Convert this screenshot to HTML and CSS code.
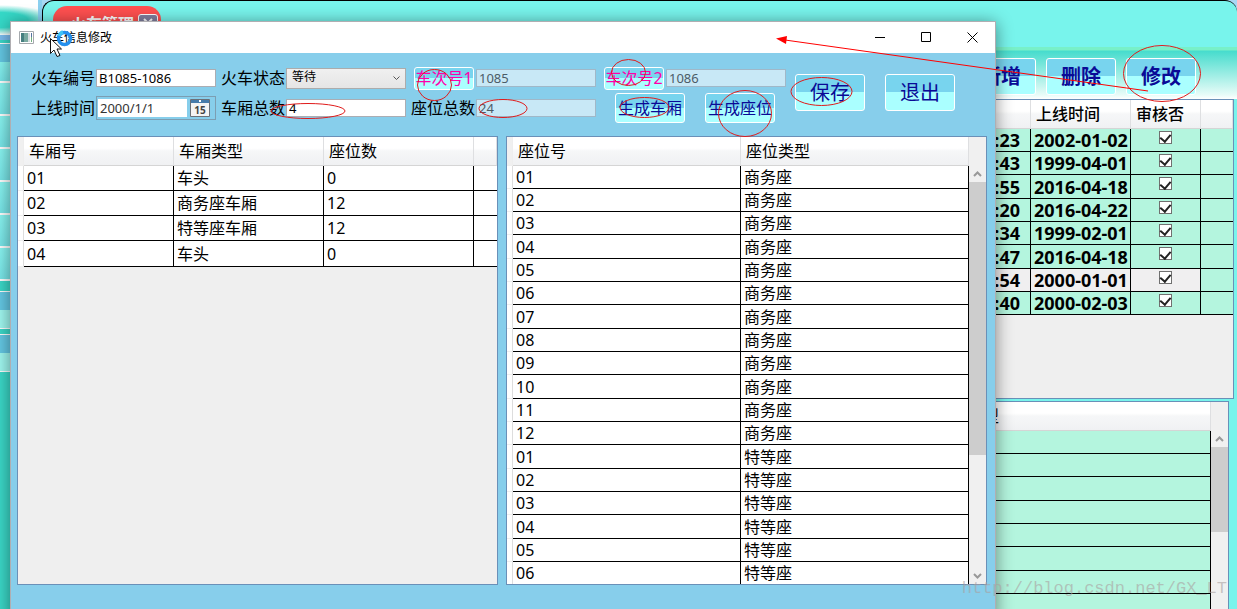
FILE: index.html
```html
<!DOCTYPE html>
<html lang="zh-CN">
<head>
<meta charset="utf-8">
<title>火车信息修改</title>
<link rel="stylesheet" href="styles.css">
</head>
<body>
<div class="app">
  <aside class="side">
    <div class="side-top"></div>
    <div class="side-head"></div>
    <div class="side-item side-first"></div>
    <div class="side-item"></div>
    <div class="side-item"></div>
    <div class="side-item"></div>
    <div class="side-item"></div>
    <div class="side-item"></div>
    <div class="side-item"></div>
    <div class="side-group"></div>
    <div class="side-group"></div>
  </aside>
  <main class="main">
    <div class="tabs"><div class="tab">火车管理<button class="tab-close" aria-label="关闭标签"><svg viewBox="0 0 10 10"><path d="M1 1l8 8M9 1L1 9"/></svg></button></div></div>
    <div class="toolbar">
      <button class="glass bold">新增</button>
      <button class="glass bold">删除</button>
      <button class="glass bold">修改</button>
    </div>
    <div class="panel trains">
      <table class="grid train-grid">
        <colgroup><col><col class="w-date"><col class="w-check"><col class="w-rest"></colgroup>
        <thead><tr><th></th><th>上线时间</th><th>审核否</th><th></th></tr></thead>
        <tbody>
          <tr><td class="r">:23</td><td>2002-01-02</td><td class="c"><input type="checkbox" checked aria-label="审核否"></td><td></td></tr>
          <tr><td class="r">:43</td><td>1999-04-01</td><td class="c"><input type="checkbox" checked aria-label="审核否"></td><td></td></tr>
          <tr><td class="r">:55</td><td>2016-04-18</td><td class="c"><input type="checkbox" checked aria-label="审核否"></td><td></td></tr>
          <tr><td class="r">:20</td><td>2016-04-22</td><td class="c"><input type="checkbox" checked aria-label="审核否"></td><td></td></tr>
          <tr><td class="r">:34</td><td>1999-02-01</td><td class="c"><input type="checkbox" checked aria-label="审核否"></td><td></td></tr>
          <tr><td class="r">:47</td><td>2016-04-18</td><td class="c"><input type="checkbox" checked aria-label="审核否"></td><td></td></tr>
          <tr class="selected"><td class="r">:54</td><td>2000-01-01</td><td class="c"><input type="checkbox" checked aria-label="审核否"></td><td></td></tr>
          <tr><td class="r">:40</td><td>2000-02-03</td><td class="c"><input type="checkbox" checked aria-label="审核否"></td><td></td></tr>
        </tbody>
      </table>
    </div>
    <div class="panel details">
      <table class="grid detail-grid">
        <colgroup><col class="w-lead"><col></colgroup>
        <thead><tr><th class="r">类型</th><th></th></tr></thead>
        <tbody>
          <tr><td></td><td></td></tr><tr><td></td><td></td></tr><tr><td></td><td></td></tr><tr><td></td><td></td></tr>
          <tr><td></td><td></td></tr><tr><td></td><td></td></tr><tr><td></td><td></td></tr><tr><td></td><td></td></tr>
        </tbody>
      </table>
      <div class="scroll"><svg class="chev" viewBox="0 0 9 6"><path d="M1 5l3.500-3.500L8 5"/></svg><div class="thumb small"></div></div>
    </div>
  </main>
</div>

<section class="dialog" role="dialog" aria-labelledby="dialog-title">
  <header class="titlebar">
    <svg class="app-icon" viewBox="0 0 15 13"><path fill="#fff" stroke="#a5a9ad" d="M.5.5h14v12H.5z"/><path fill="#467f80" d="M2 2h7v9H2z"/><path fill="#79a9a0" d="M5 2h4v9H5z"/><path fill="#d5dde0" d="M9 2h2v9H9z"/><path fill="#5672a0" d="M12 2h1v4h-1z"/><path fill="#6fae7d" d="M12 6h1v5h-1z"/></svg>
    <h1 id="dialog-title">火车信息修改</h1>
    <button class="win" aria-label="最小化"><svg viewBox="0 0 11 11"><path d="M0 5.500h10"/></svg></button>
    <button class="win" aria-label="最大化"><svg viewBox="0 0 11 11"><path d="M.5 .5h9v9h-9z"/></svg></button>
    <button class="win" aria-label="关闭"><svg viewBox="0 0 11 11"><path d="M.5 .5l10 10M10.500 .5l-10 10"/></svg></button>
  </header>
  <form class="form">
    <div class="fields">
      <label for="no">火车编号</label><input id="no" class="box" value="B1085-1086">
      <label for="state">火车状态</label><div class="combo"><select id="state"><option>等待</option></select><svg class="arrow" viewBox="0 0 7 5"><path d="M.5 .5l3 3 3-3"/></svg></div>
      <button type="button" class="glass pink">车次号1</button><input class="box off" value="1085" disabled aria-label="车次号1">
      <button type="button" class="glass pink second">车次号2</button><input class="box off" value="1086" disabled aria-label="车次号2">
      <label for="date">上线时间</label>
      <div class="picker"><input id="date" value="2000/1/1"><button type="button" class="cal" aria-label="选择日期"><svg viewBox="0 0 20 18"><path fill="#f4f4f4" stroke="#6b7178" d="M.5.5h19v17H.5z"/><path fill="#477cab" d="M1 1h18v3H1z"/><path fill="#fff" d="M9 1h2v2H9z"/><text x="10" y="15">15</text></svg></button></div>
      <label for="cars">车厢总数</label><input id="cars" class="box" value="4">
      <label for="seats">座位总数</label><input id="seats" class="box off" value="24" disabled>
      <div class="generate"><button type="button" class="glass mid">生成车厢</button><button type="button" class="glass mid">生成座位</button></div>
    </div>
    <div class="actions"><button type="button" class="glass">保存</button><button type="button" class="glass">退出</button></div>
  </form>
  <div class="lists">
    <div class="panel cars">
      <table class="grid car-grid">
        <colgroup><col class="w-head"><col class="w-car"><col class="w-car"><col class="w-car"><col></colgroup>
        <thead><tr><th></th><th>车厢号</th><th>车厢类型</th><th>座位数</th><th></th></tr></thead>
        <tbody>
          <tr><td></td><td>01</td><td>车头</td><td>0</td><td></td></tr>
          <tr><td></td><td>02</td><td>商务座车厢</td><td>12</td><td></td></tr>
          <tr><td></td><td>03</td><td>特等座车厢</td><td>12</td><td></td></tr>
          <tr><td></td><td>04</td><td>车头</td><td>0</td><td></td></tr>
        </tbody>
      </table>
    </div>
    <div class="panel seats">
      <table class="grid seat-grid">
        <colgroup><col class="w-head"><col><col></colgroup>
        <thead><tr><th></th><th>座位号</th><th>座位类型</th></tr></thead>
        <tbody>
          <tr><td></td><td>01</td><td>商务座</td></tr>
          <tr><td></td><td>02</td><td>商务座</td></tr>
          <tr><td></td><td>03</td><td>商务座</td></tr>
          <tr><td></td><td>04</td><td>商务座</td></tr>
          <tr><td></td><td>05</td><td>商务座</td></tr>
          <tr><td></td><td>06</td><td>商务座</td></tr>
          <tr><td></td><td>07</td><td>商务座</td></tr>
          <tr><td></td><td>08</td><td>商务座</td></tr>
          <tr><td></td><td>09</td><td>商务座</td></tr>
          <tr><td></td><td>10</td><td>商务座</td></tr>
          <tr><td></td><td>11</td><td>商务座</td></tr>
          <tr><td></td><td>12</td><td>商务座</td></tr>
          <tr><td></td><td>01</td><td>特等座</td></tr>
          <tr><td></td><td>02</td><td>特等座</td></tr>
          <tr><td></td><td>03</td><td>特等座</td></tr>
          <tr><td></td><td>04</td><td>特等座</td></tr>
          <tr><td></td><td>05</td><td>特等座</td></tr>
          <tr><td></td><td>06</td><td>特等座</td></tr>
        </tbody>
      </table>
      <div class="scroll"><svg class="chev" viewBox="0 0 9 6"><path d="M1 5l3.500-3.500L8 5"/></svg><div class="thumb"></div><svg class="chev down" viewBox="0 0 9 6"><path d="M1 1l3.500 3.500L8 1"/></svg></div>
    </div>
  </div>
</section>

<svg class="marks" width="1237" height="609" viewBox="0 0 1237 609" aria-hidden="true">
  <g fill="none" stroke="#e01b1b">
    <ellipse cx="434.500" cy="85" rx="17" ry="15.500"/>
    <ellipse cx="628.500" cy="72.500" rx="17" ry="13"/>
    <ellipse cx="308" cy="111" rx="37" ry="7.500"/>
    <ellipse cx="503" cy="108.500" rx="24" ry="9"/>
    <ellipse cx="644.500" cy="107.500" rx="24.500" ry="10"/>
    <ellipse cx="745" cy="113.500" rx="26.500" ry="23"/>
    <ellipse cx="821.500" cy="91.500" rx="30.500" ry="14"/>
    <ellipse cx="1162" cy="73.500" rx="38.500" ry="28"/>
    <path stroke="#f00" d="M1148 91L785 40"/>
  </g>
  <path fill="#f00" d="M776 38.500l11-2.500-1 8z"/>
  <circle cx="64.500" cy="38.500" r="6" fill="none" stroke="#2490ee" stroke-width="3.500"/>
  <path d="M59 36a6 6 0 0 1 4-4" fill="none" stroke="#3dc4f6" stroke-width="3.500"/>
  <path fill="#fff" stroke="#111" d="M50.500 38.500v15l3.500-3.500 3 6.500 3-1-3-6.500h4.500z"/>
</svg>
<div class="watermark">http://blog.csdn.net/GX_LT</div>
</body>
</html>
```

FILE: styles.css
```css
* { box-sizing: border-box; }
body {
  margin: 0;
  height: 100vh;
  overflow: hidden;
  position: relative;
  background: #3bd8c8;
  color: #000;
  font-family: "Noto Sans", "Noto Sans CJK SC", sans-serif;
  font-size: 16px;
}
button, input, select { font: inherit; margin: 0; }
button { padding: 0; }

.app { display: flex; height: 100%; background: linear-gradient(90deg, #3bd8c8 42px, #a8d8f4 42px); }
.side { width: 42px; flex: none; }
.side-top {
  height: 35px;
  border-right: 4px solid #8cd0f0;
  background: radial-gradient(56px 15px at 0 20px, #35d9c8 50%, #fff);
}
.side-head { height: 27px; background: linear-gradient(#7cbdf0 0 5px, #3bd8c8 5px 8px, #fff 8px 9px, #64c8e4 9px); }
.side-item { height: 33px; border-bottom: 2px solid #fff; background: linear-gradient(#8af6f2, #78e5e8); }
.side-first { height: 21px; }
.side-group {
  height: 38px;
  margin-top: 10px;
  border: solid #fff;
  border-width: 1px 0;
  background: linear-gradient(#64c8e4 0 50%, #a0f8f0 50%);
}
.side-group + .side-group { margin-top: 5px; }

.main {
  flex: 1;
  min-width: 0;
  height: 100%;
  display: flex;
  flex-direction: column;
  overflow: hidden;
  background: #78f4ec;
  border: 1px solid #000;
  border-right: 0;
  border-bottom: 0;
  border-radius: 12px 12px 0 0;
}
.tabs { height: 46px; flex: none; padding: 5px 0 0 10px; }
.tab {
  display: flex;
  align-items: center;
  justify-content: flex-end;
  gap: 4px;
  width: 108px;
  height: 34px;
  padding-right: 3px;
  border-radius: 14px 14px 0 0;
  background: #ff5050;
  color: #fff;
  font-weight: bold;
}
.tab-close { display: grid; place-items: center; width: 20px; height: 18px; border: 1px solid #fff; border-radius: 3px; background: #8080a0; }
.tab-close svg { width: 10px; height: 10px; stroke: #fff; stroke-width: 2; }
.toolbar {
  display: flex;
  flex: none;
  justify-content: flex-end;
  gap: 10px;
  height: 52px;
  padding: 11px 41px 0 0;
  background: linear-gradient(#78f0c8 0 3px, #46dccd 4px, #e8fcf8 48px, #fff);
}
.glass {
  width: 70px;
  height: 37px;
  border: 1px solid #fff;
  border-radius: 3px;
  background: linear-gradient(#78d4ee 0 50%, #aaffff 50%);
  color: #0a0a96;
  font-size: 20px;
  line-height: 1;
  white-space: nowrap;
  overflow: hidden;
}
.bold { font-weight: bold; }

.panel { display: flex; overflow: hidden; border: 1px solid #6a90b8; background: #efefef; }
.trains { height: 300px; flex: none; margin-right: 3px; }
.details { flex: 1; margin: 2px 8px 0 0; border-bottom: 0; }

.grid { flex: 1; width: 100%; table-layout: fixed; border-collapse: separate; border-spacing: 0; align-self: flex-start; line-height: 20px; }
.grid th {
  height: 29px;
  padding: 0 5px;
  text-align: left;
  font-weight: normal;
  white-space: nowrap;
  background: linear-gradient(#fff 0 40%, #f6f7f8 50%, #f0f1f3);
  border-right: 1px solid #dedfe1;
  border-bottom: 1px solid #d5d5d5;
}
.grid td { height: 23px; padding: 0 3px; white-space: nowrap; background: #fff; border-right: 1px solid #000; border-bottom: 1px solid #000; }
.grid .r { text-align: right; padding-right: 10px; }
.grid .c { text-align: center; line-height: 1; font-size: 16px; }
.trains td, .details td { background: #b4f5de; font-weight: bold; font-size: 18px; }
.trains th { font-weight: 500; }
.trains td:last-child { border-right: 0; }
.trains .selected td:not(:last-child) { background: #f0eff0; }
.train-grid tbody tr:nth-child(3n) td, .detail-grid tbody tr:nth-child(3n) td { height: 24px; }
.w-date { width: 100px; }
.w-check { width: 70px; }
.w-rest { width: 32px; }
.w-lead { width: 957px; }
.details th.r { padding-right: 2px; border-right: 0; }
.details td:first-child { border-right: 0; }
.c input {
  appearance: none;
  width: 13px;
  height: 13px;
  margin: 0 0 6px;
  vertical-align: middle;
  border: 1px solid #707070;
  background: #fff;
  display: inline-grid;
  place-items: center;
}
.c input::before { content: ""; width: 5px; height: 8px; border: solid #222; border-width: 0 2px 2px 0; transform: rotate(40deg); }

.scroll { width: 17px; flex: none; display: flex; flex-direction: column; align-items: center; background: #f0f0f0; padding-top: 34px; }
.chev { width: 9px; height: 6px; flex: none; fill: none; stroke: #999; stroke-width: 2; margin-bottom: 5px; }
.thumb { width: 100%; height: 273px; background: #cdcdcd; }
.thumb.small { height: 85px; }
.down { margin: auto 0 5px; }

.dialog {
  position: absolute;
  left: 10px;
  top: 21px;
  width: 986px;
  height: 600px;
  background: #87ceeb;
  border: 1px solid #b0aeb2;
  box-shadow: 0 2px 16px rgba(0, 0, 0, .45);
}
.titlebar { display: flex; align-items: center; height: 31px; padding-left: 8px; background: #fff; }
.titlebar h1 { flex: 1; margin: 0 0 0 6px; font-size: 12px; font-weight: normal; line-height: 18px; }
.app-icon { width: 15px; height: 13px; }
.win { display: grid; place-items: center; width: 46px; height: 29px; border: 0; background: none; }
.win svg { width: 11px; height: 11px; fill: none; stroke: #000; }

.form { display: flex; gap: 12px; height: 83px; padding: 13px 0 0 20px; }
.fields {
  display: grid;
  grid-template-columns: 65px 125px 65px 128px 60px 130px 60px 119px;
  grid-template-rows: 24px 30px;
  row-gap: 3px;
  column-gap: 0;
  align-items: center;
  align-content: start;
}
.fields label { line-height: 24px; white-space: nowrap; }
.fields input { font-size: 13px; min-width: 0; color: #000; }
.box { width: 120px; height: 18px; padding: 0 2px; border: 1px solid #abadb3; background: #fff; }
.off { margin-left: 2px; background: #c8e8f6; border-color: #a0b8c8; }
.fields .off { color: #4c5c66; }
.combo { position: relative; width: 120px; height: 21px; }
.combo select { display: block; appearance: none; width: 100%; height: 100%; padding: 0 5px 2px; border: 1px solid #acacac; border-radius: 0; background: linear-gradient(#f0f0f0, #e5e5e5); color: #000; font-size: 12px; line-height: 16px; }
.arrow { position: absolute; right: 6px; top: 8px; width: 7px; height: 5px; fill: none; stroke: #555; }
.glass.pink { width: 60px; height: 23px; color: #f0a; font-size: 16px; }
.glass.mid { height: 30px; font-size: 16px; }
.picker { display: flex; align-items: center; gap: 3px; width: 120px; height: 24px; padding: 1px 5px 1px 1px; border: 1px solid #7c9eb2; }
.picker input { flex: 1; height: 18px; padding: 0 2px; border: 0; background: #fff; color: #333; }
.cal { width: 20px; height: 18px; border: 0; background: none; line-height: 0; }
.cal svg { width: 20px; height: 18px; }
.cal text { font: bold 10px "Noto Sans", sans-serif; fill: #444; text-anchor: middle; }
.fields > label[for="seats"] { margin-left: -3px; }
.generate { grid-column: span 2; display: flex; gap: 20px; padding-left: 11px; }
.actions { display: flex; gap: 20px; padding-top: 8px; }

.lists { display: flex; gap: 8px; height: 449px; padding: 0 8px 0 6px; }
.cars { flex: 481; }
.seats { flex: 481; }
.lists td:first-child { border-color: #eee #ddd #eee #eee; }
.lists th:first-child { background: #f0f0f0; border-right-color: #eee; border-bottom-color: #eee; }
.w-head { width: 6px; }
.lists th:first-child, .lists td:first-child { padding: 0; }
.w-car { width: 150px; }
.car-grid td { height: 25px; }
.car-grid tr:last-child td { height: 26px; }
.cars td:last-child { border-right: 0; }
.seat-grid tbody tr:nth-child(3n+4) td { height: 24px; }

.marks { position: absolute; left: 0; top: 0; pointer-events: none; }
.watermark {
  position: absolute;
  right: 10px;
  bottom: 8px;
  color: rgba(170, 160, 160, .6);
  font: 17px/24px "Liberation Mono", monospace;
}
```
